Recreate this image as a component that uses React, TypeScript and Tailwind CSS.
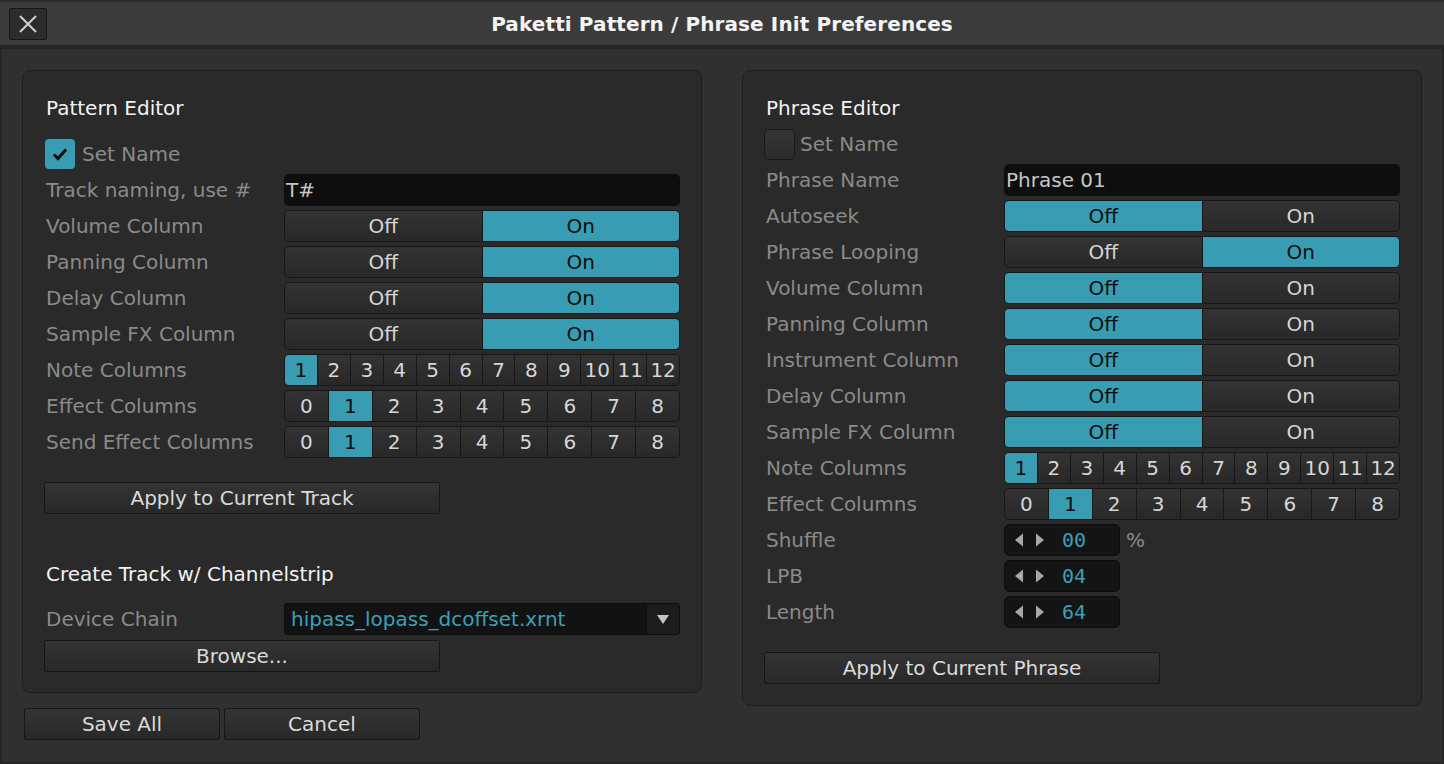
import React from 'react';

const TEAL = 'bg-[#389db2]';

const Label: React.FC<{ text: string }> = ({ text }) => (
  <div className="w-[240px] shrink-0 pl-[2px] text-[20px] leading-6 text-[#8a8a8a] whitespace-nowrap">{text}</div>
);

const Row: React.FC<{ label: string; children: React.ReactNode }> = ({ label, children }) => (
  <div className="flex items-center h-8">
    <Label text={label} />
    <div className="w-[396px] h-8 flex items-center">{children}</div>
  </div>
);

// Off / On style segmented switch
const Segmented: React.FC<{ items: string[]; active: number }> = ({ items, active }) => (
  <div className="w-full h-8 flex rounded-[5px] border border-[#171717] overflow-hidden bg-[#171717] gap-px">
    {items.map((item, i) => (
      <div
        key={item + i}
        className={`flex-1 flex items-center justify-center text-[20px] leading-none ${
          i === active
            ? `${TEAL} text-[#0c0c0c]`
            : 'bg-gradient-to-b from-[#333333] to-[#282828] text-[#d6d6d6]'
        }`}
      >
        {item}
      </div>
    ))}
  </div>
);

const Button: React.FC<{ text: string; w?: string }> = ({ text, w = 'w-[396px]' }) => (
  <div
    className={`${w} h-8 flex items-center justify-center border border-[#161616] rounded-[2px] bg-gradient-to-b from-[#343434] to-[#282828] text-[20px] text-[#dadada]`}
  >
    {text}
  </div>
);

const TextField: React.FC<{ value: string }> = ({ value }) => (
  <div className="w-full h-8 rounded-[5px] bg-[#0e0e0e] flex items-center pl-[2px] text-[20px] text-[#c6c6c6]">
    {value}
  </div>
);

const Checkbox: React.FC<{ checked: boolean }> = ({ checked }) =>
  checked ? (
    <div className={`w-[30px] h-[30px] rounded-[4px] ${TEAL} flex items-center justify-center`}>
      <svg width="18" height="16" viewBox="0 0 18 16">
        <path d="M3 8.5 L7 12.5 L15 3.5" fill="none" stroke="#0a0a0a" strokeWidth="3" />
      </svg>
    </div>
  ) : (
    <div className="w-[31px] h-[31px] rounded-[5px] border border-[#191919] bg-gradient-to-b from-[#353535] to-[#2b2b2b]" />
  );

const Spin: React.FC<{ value: string; unit?: string }> = ({ value, unit }) => (
  <div className="flex items-center">
    <div className="w-[116px] h-8 rounded-[5px] border border-[#0c0c0c] bg-[#141414] flex items-center pl-[10px]">
      <svg width="32" height="14" viewBox="0 0 32 14">
        <path d="M0 7 L8 0.5 L8 13.5 Z" fill="#a8a8a8" />
        <path d="M21 0.5 L29 7 L21 13.5 Z" fill="#a8a8a8" />
      </svg>
      <span className="ml-[15px] text-[20px] text-[#3aa1b7] font-['DejaVu_Sans_Mono',monospace]">{value}</span>
    </div>
    {unit && <span className="ml-[6px] text-[20px] text-[#8a8a8a]">{unit}</span>}
  </div>
);

const Title: React.FC<{ text: string }> = ({ text }) => (
  <div className="h-6 pl-[2px] text-[20px] leading-6 text-[#f2f2f2]">{text}</div>
);

const Panel: React.FC<{ h: string; children: React.ReactNode }> = ({ h, children }) => (
  <div className={`w-[680px] ${h} rounded-[8px] border border-[#1d1d1d] bg-[#2a2a2a] pt-[25px] px-[21px] flex flex-col`}>
    {children}
  </div>
);

const noteCols = ['1', '2', '3', '4', '5', '6', '7', '8', '9', '10', '11', '12'];
const fxCols = ['0', '1', '2', '3', '4', '5', '6', '7', '8'];

function PatternPanel() {
  return (
    <Panel h="h-[623px]">
      <Title text="Pattern Editor" />
      <div className="mt-[18px] h-8 flex items-center gap-[7px]">
        <div className="pl-px">
          <Checkbox checked />
        </div>
        <span className="text-[20px] text-[#8a8a8a]">Set Name</span>
      </div>
      <div className="mt-1 flex flex-col gap-1">
        <Row label="Track naming, use #">
          <TextField value="T#" />
        </Row>
        <Row label="Volume Column">
          <Segmented items={['Off', 'On']} active={1} />
        </Row>
        <Row label="Panning Column">
          <Segmented items={['Off', 'On']} active={1} />
        </Row>
        <Row label="Delay Column">
          <Segmented items={['Off', 'On']} active={1} />
        </Row>
        <Row label="Sample FX Column">
          <Segmented items={['Off', 'On']} active={1} />
        </Row>
        <Row label="Note Columns">
          <Segmented items={noteCols} active={0} />
        </Row>
        <Row label="Effect Columns">
          <Segmented items={fxCols} active={1} />
        </Row>
        <Row label="Send Effect Columns">
          <Segmented items={fxCols} active={1} />
        </Row>
      </div>
      <div className="mt-[24px]">
        <Button text="Apply to Current Track" />
      </div>
      <div className="mt-[48px]">
        <Title text="Create Track w/ Channelstrip" />
      </div>
      <div className="mt-[17px]">
        <Row label="Device Chain">
          <div className="w-full h-8 rounded-[3px] border border-[#0c0c0c] bg-[#121212] flex items-center">
            <span className="flex-1 pl-[6px] text-[20px] text-[#3aa1b7]">hipass_lopass_dcoffset.xrnt</span>
            <div className="w-[33px] h-full border-l border-[#0c0c0c] bg-[#1c1c1c] flex items-center justify-center">
              <svg width="12" height="10" viewBox="0 0 12 10">
                <path d="M0 1 L12 1 L6 10 Z" fill="#c4c4c4" />
              </svg>
            </div>
          </div>
        </Row>
      </div>
      <div className="mt-[5px]">
        <Button text="Browse..." />
      </div>
    </Panel>
  );
}

function PhrasePanel() {
  const offRows = ['Volume Column', 'Panning Column', 'Instrument Column', 'Delay Column', 'Sample FX Column'];
  return (
    <Panel h="h-[636px]">
      <Title text="Phrase Editor" />
      <div className="mt-2 h-8 flex items-center gap-[5px]">
        <Checkbox checked={false} />
        <span className="text-[20px] text-[#8a8a8a]">Set Name</span>
      </div>
      <div className="mt-1 flex flex-col gap-1">
        <Row label="Phrase Name">
          <TextField value="Phrase 01" />
        </Row>
        <Row label="Autoseek">
          <Segmented items={['Off', 'On']} active={0} />
        </Row>
        <Row label="Phrase Looping">
          <Segmented items={['Off', 'On']} active={1} />
        </Row>
        {offRows.map((r) => (
          <Row key={r} label={r}>
            <Segmented items={['Off', 'On']} active={0} />
          </Row>
        ))}
        <Row label="Note Columns">
          <Segmented items={noteCols} active={0} />
        </Row>
        <Row label="Effect Columns">
          <Segmented items={fxCols} active={1} />
        </Row>
        <Row label="Shuffle">
          <Spin value="00" unit="%" />
        </Row>
        <Row label="LPB">
          <Spin value="04" />
        </Row>
        <Row label="Length">
          <Spin value="64" />
        </Row>
      </div>
      <div className="mt-[24px]">
        <Button text="Apply to Current Phrase" />
      </div>
    </Panel>
  );
}

export default function App() {
  return (
    <div className="w-[1444px] h-[764px] flex flex-col bg-[#303030] font-['DejaVu_Sans',sans-serif] overflow-hidden">
      {/* title bar */}
      <div className="h-[45px] shrink-0 relative flex items-center justify-center bg-[#3b3b3b] border-t-2 border-[#2a2a2a]">
        <div className="absolute left-[9px] top-[6px] w-[38px] h-[32px] rounded-[2px] border border-[#181818] bg-[#2c2c2c] flex items-center justify-center">
          <svg width="18" height="18" viewBox="0 0 18 18">
            <path d="M1 1 L17 17 M17 1 L1 17" stroke="#cfcfcf" strokeWidth="2" />
          </svg>
        </div>
        <span className="text-[20px] font-bold text-[#f4f4f4] tracking-[0.1px]">Paketti Pattern / Phrase Init Preferences</span>
      </div>
      <div className="h-[4px] shrink-0 bg-[#242424]" />
      <div className="flex-1 flex gap-[40px] px-[20px] pt-[21px] border-x-2 border-b-2 border-[#262626]">
        <div className="flex flex-col">
          <PatternPanel />
          <div className="mt-[15px] flex gap-[4px] pl-[2px]">
            <Button text="Save All" w="w-[196px]" />
            <Button text="Cancel" w="w-[196px]" />
          </div>
        </div>
        <PhrasePanel />
      </div>
    </div>
  );
}
